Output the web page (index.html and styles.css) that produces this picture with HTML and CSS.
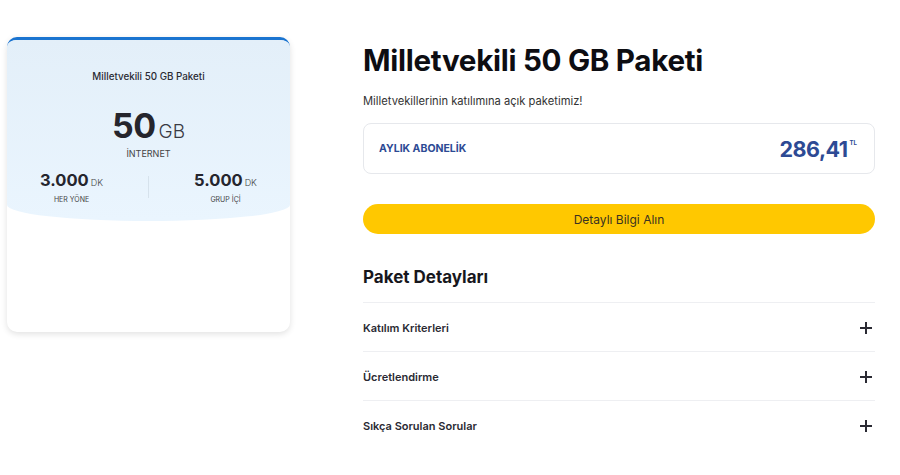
FILE: index.html
```html
<!DOCTYPE html>
<html lang="tr">
<head>
<meta charset="utf-8">
<link rel="stylesheet" href="styles.css">
</head>
<body>
<div class="page">
  <div class="card">
    <div class="card-top">
      <div class="card-title">Milletvekili 50 GB Paketi</div>
      <div class="data"><span class="data-num">50</span><span class="data-unit">GB</span></div>
      <div class="data-label">İNTERNET</div>
      <div class="mins">
        <div class="min">
          <div><span class="min-num">3.000</span><span class="min-unit">DK</span></div>
          <div class="min-label">HER YÖNE</div>
        </div>
        <div class="min-sep"></div>
        <div class="min">
          <div><span class="min-num">5.000</span><span class="min-unit">DK</span></div>
          <div class="min-label">GRUP İÇİ</div>
        </div>
      </div>
    </div>
  </div>
  <div class="detail">
    <h1 class="title">Milletvekili 50 GB Paketi</h1>
    <p class="subtitle">Milletvekillerinin katılımına açık paketimiz!</p>
    <div class="price-box">
      <span class="price-label">AYLIK ABONELİK</span>
      <span class="price"><span class="price-num">286,41</span><span class="price-cur">TL</span></span>
    </div>
    <button class="cta">Detaylı Bilgi Alın</button>
    <h2 class="section">Paket Detayları</h2>
    <div class="acc">
      <div class="acc-row"><span>Katılım Kriterleri</span><span class="plus"></span></div>
      <div class="acc-row"><span>Ücretlendirme</span><span class="plus"></span></div>
      <div class="acc-row"><span>Sıkça Sorulan Sorular</span><span class="plus"></span></div>
    </div>
  </div>
</div>
</body>
</html>
```
FILE: styles.css
```css
* { box-sizing: border-box; }
html, body { margin: 0; background: #fff; }
body { font-family: "Inter", "Noto Sans", sans-serif; color: #1b1b22; }
.page { display: flex; align-items: flex-start; padding: 37px 0 0 7px; gap: 73px; }

.card {
  width: 283px; height: 295px; border-radius: 10px; border-top: 3px solid #1a74d0;
  background: #fff; box-shadow: 0 2px 6px rgba(0,0,0,0.12); overflow: hidden;
}
.card-top {
  background: linear-gradient(180deg, #e3eff9 0%, #eaf5fe 100%);
  border-radius: 0 0 50% 50% / 0 0 16px 16px;
  height: 181px; text-align: center; padding-top: 31px;
}
.card-title { font-size: 9.8px; font-weight: 500; color: #2a2a33; }
.data { margin-top: 26px; line-height: 36px; }
.data-num { font-size: 34px; font-weight: 700; color: #25252d; letter-spacing: -0.5px; }
.data-unit { font-size: 19px; font-weight: 300; color: #3a3a44; margin-left: 3px; }
.data-label { font-size: 9px; color: #444; margin-top: -2px; }
.mins { display: flex; align-items: center; margin: 13px -12px 0; }
.min { flex: 1; text-align: center; line-height: 1; }
.min-num { font-size: 16.5px; font-weight: 700; color: #25252d; }
.min-unit { font-size: 9px; font-weight: 300; color: #444; margin-left: 2px; }
.min-label { font-size: 7px; color: #444; margin-top: 7px; }
.min-sep { width: 1px; height: 22px; background: #d6e2ec; }

.detail { width: 512px; padding-top: 6px; }
.title { font-size: 29.6px; font-weight: 700; margin: 0; line-height: 34px; letter-spacing: -0.3px; color: #0d0d12; }
.subtitle { font-size: 11.2px; color: #333; margin: 17px 0 0; line-height: 14px; }
.price-box {
  margin-top: 15px; height: 51px; border: 1px solid #e6e8ec; border-radius: 8px;
  display: flex; align-items: center; justify-content: space-between; padding: 0 17px 0 15px;
}
.price-label { font-size: 10.5px; font-weight: 700; color: #2d4a94; }
.price { display: flex; align-items: flex-start; color: #2d4a94; }
.price-num { font-size: 21.5px; font-weight: 700; letter-spacing: -0.5px; }
.price-cur { font-size: 6px; font-weight: 700; margin-left: 2px; margin-top: 3px; }
.cta {
  display: block; width: 100%; margin-top: 30px; height: 30px; border: 0; border-radius: 15px;
  background: #ffc800; font-family: inherit; font-size: 12px; color: #3a3220; cursor: pointer;
}
.section { font-size: 17px; font-weight: 700; margin: 33px 0 0; line-height: 20px; color: #17171d; }
.acc { margin-top: 15px; }
.acc-row {
  display: flex; justify-content: space-between; align-items: center; height: 49px;
  border-top: 1px solid #eeeff2; font-size: 11px; font-weight: 600; color: #2a2a33;
  padding-top: 2px;
}
.plus { width: 12px; height: 12px; margin-right: 3px; position: relative; }
.plus::before, .plus::after { content: ""; position: absolute; background: #2a2a33; }
.plus::before { left: 0; right: 0; top: 5.25px; height: 1.5px; }
.plus::after { top: 0; bottom: 0; left: 5.25px; width: 1.5px; }
```
